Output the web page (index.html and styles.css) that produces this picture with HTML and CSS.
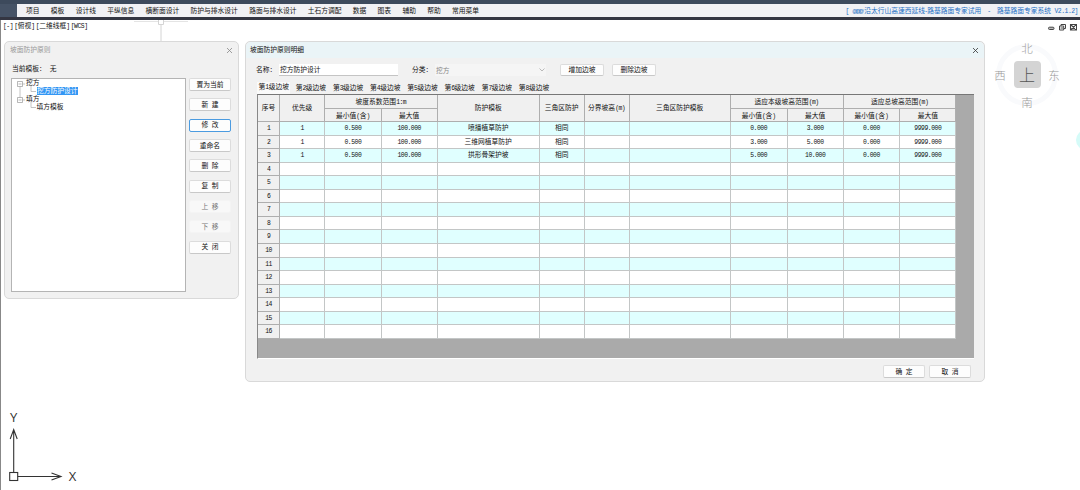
FILE: index.html
```html
<!DOCTYPE html>
<html lang="zh-CN">
<head>
	<meta charset="UTF-8">
	<title>坡面防护原则</title>
	<link rel="stylesheet" href="styles.css">
</head>
<body>
	<header class="topbar">
		<div class="logo"></div>
		<nav class="menu">
			<span>项目</span><span>模板</span><span>设计线</span><span>平纵信息</span><span>横断面设计</span><span>防护与排水设计</span><span>路面与排水设计</span><span>土石方调配</span><span>数据</span><span>图表</span><span>辅助</span><span>帮助</span><span>常用菜单</span>
		</nav>
		<div class="caption"><i>[ </i><b>@@@</b>沿太行山高速西延线-路基路面专家试用<i class="dash">-</i>路基路面专家系统<i> V2.1.2]</i></div>
	</header>
	<main class="desktop">
		<div class="viewname"><i>[-]</i> <i>[</i>俯视<i>]</i> <i>[</i>二维线框<i>]</i> <i>[WCS]</i></div>
		<svg class="grip" width="56" height="24" viewBox="0 0 56 24"><path d="M0 1.5H24M29 1.5H54" stroke="#e4e4e4"/><path d="M24.5 0V4.500H29.5V0M27 4.500V23" fill="none" stroke="#d4d4d4"/></svg>
		<svg class="winctl" width="30" height="9" viewBox="0 0 30 9" fill="none" stroke="#444">
			<rect x="1.500" y="4.200" width="5.500" height="2.300" rx="1" stroke-width="1" fill="#bbb"/>
			<path d="M14 3V1.500H18.500V5.500H17M12.500 3H16.700V7H12.500ZM13.500 5H16" stroke-width="1"/>
			<path d="M23.500 1.500H29.500V7H23.500ZM24 2L29 6.500M29 2L24 6.500" stroke-width="1.100"/>
		</svg>

		<!-- 方位罗盘 -->
		<div class="compass">
			<span class="north">北</span>
			<span class="west">西</span>
			<span class="cube">上</span>
			<span class="east">东</span>
			<span class="south">南</span>
		</div>
		<div class="bubble"></div>

		<!-- 坐标轴 -->
		<svg class="axis" width="80" height="85" viewBox="0 -10 80 85" fill="none" stroke="#333" stroke-width="1.100">
			<rect x="4.700" y="57.500" width="8" height="8"/>
			<path d="M8.700 57.500V15M5.200 24L8.700 14.500L12.200 24M12.700 61.500H55.500M46.500 58L56 61.500L46.500 65"/>
			<text x="8.700" y="7">Y</text>
			<text x="67.500" y="66">X</text>
		</svg>

		<section class="win principle">
			<div class="title"><span>坡面防护原则</span><svg width="7" height="7" viewBox="0 0 7 7"><path d="M1 1L6 6M6 1L1 6"/></svg></div>
			<p class="current">当前模板：<span>无</span></p>
			<div class="body">
				<div class="tree">
					<svg class="branch" width="26" height="32" viewBox="0 0 26 32" fill="none" stroke="#b5b5b5" stroke-width=".8">
						<path d="M3 5V19M5 3H8M14 5V10.500H19M5 19H8M14 21V26.500H19"/>
						<path d="M.5 .5H5.500V5.500H.5ZM1.500 3H4.500M.5 16.500H5.500V21.500H.5ZM1.500 19H4.500" fill="#fff" stroke="#999" stroke-width=".7"/>
					</svg>
					<p>挖方</p>
					<p class="leaf"><mark>挖方防护设计</mark></p>
					<p>填方</p>
					<p class="leaf">填方模板</p>
				</div>
				<div class="side">
					<button>置为当前</button>
					<button>新&ensp;建</button>
					<button class="focus">修&ensp;改</button>
					<button>重命名</button>
					<button>删&ensp;除</button>
					<button>复&ensp;制</button>
					<button disabled>上&ensp;移</button>
					<button disabled>下&ensp;移</button>
					<button>关&ensp;闭</button>
				</div>
			</div>
		</section>

		<section class="win detail">
			<div class="title"><span>坡面防护原则明细</span><svg width="7" height="7" viewBox="0 0 7 7"><path d="M1 1L6 6M6 1L1 6"/></svg></div>
			<div class="form">
				<label>名称：</label><div class="field">挖方防护设计</div>
				<label class="kind">分类：</label><div class="field select">挖方<svg width="6" height="4" viewBox="0 0 6 4"><path d="M.5 .5L3 3L5.500 .5" fill="none" stroke="#aaa" stroke-width=".8"/></svg></div>
				<button>增加边坡</button><button>删除边坡</button>
			</div>
			<div class="tabs">
				<span class="on">第<i>1</i>级边坡</span><span>第<i>2</i>级边坡</span><span>第<i>3</i>级边坡</span><span>第<i>4</i>级边坡</span><span>第<i>5</i>级边坡</span><span>第<i>6</i>级边坡</span><span>第<i>7</i>级边坡</span><span>第<i>8</i>级边坡</span>
			</div>
			<div class="sheet">
				<div class="grid" id="grid">
					<div class="th tall">序号</div>
					<div class="th tall">优先级</div>
					<div class="th wide">坡度系数范围<i>1:m</i></div>
					<div class="th tall">防护模板</div>
					<div class="th tall">三角区防护</div>
					<div class="th tall">分界坡高<i>(m)</i></div>
					<div class="th tall">三角区防护模板</div>
					<div class="th wide">适应本级坡高范围<i>(m)</i></div>
					<div class="th wide">适应总坡高范围<i>(m)</i></div>
					<div class="th">最小值<i>(</i>含<i>)</i></div>
					<div class="th">最大值</div>
					<div class="th">最小值<i>(</i>含<i>)</i></div>
					<div class="th">最大值</div>
					<div class="th">最小值<i>(</i>含<i>)</i></div>
					<div class="th">最大值</div>
				</div>
			</div>
			<div class="foot"><button>确&ensp;定</button><button>取&ensp;消</button></div>
		</section>
	</main>
	<script>
	var data = [
		['1','0.500','100.000','喷播植草防护','相同','','','0.000','3.000','0.000','9999.000'],
		['1','0.500','100.000','三维网植草防护','相同','','','3.000','5.000','0.000','9999.000'],
		['1','0.500','100.000','拱形骨架护坡','相同','','','5.000','10.000','0.000','9999.000']
	];
	var oGrid = document.getElementById('grid');
	//共16行，没有数据的行留空
	for(var i=0;i<16;i++){
		var row = [i+1].concat(data[i] || ['','','','','','','','','','','']);
		for(var j=0;j<row.length;j++){
			var cell = document.createElement('div');
			cell.className = j==0 ? 'td no' : (i%2==0 ? 'td odd' : 'td');
			if(j==4 || j==5){
				cell.innerHTML = row[j];
			}else{
				cell.innerHTML = '<i>'+row[j]+'</i>';
			}
			oGrid.appendChild(cell);
		}
	}
	</script>
</body>
</html>
```
FILE: styles.css
```css
*{margin: 0;padding: 0;box-sizing: border-box;}
body{width: 1080px;height: 490px;overflow: hidden;background: #fff;color: #111;font: 6.75px/10px "Liberation Sans","Noto Sans CJK SC",sans-serif;white-space: nowrap;display: flex;flex-direction: column;}
i{font-family: "Liberation Mono",monospace;font-style: normal;font-size: 6.4px;letter-spacing: -.465px;white-space: pre;}
svg{display: block;flex: none;}
button{width: 42px;height: 13px;background: #fdfdfd;border: 1px solid #dcdcdc;border-bottom-color: #c8c8c8;border-radius: 2px;font: inherit;line-height: 10px;color: #111;text-align: center;}
button:disabled{color: #777;border-color: #f4f4f4;background: #f8f8f8;}
button.focus{border-color: #4b9be0;}

.topbar{height: 20px;flex: none;border-top: 4px solid #3d4a5c;border-bottom: 3px solid #343642;background: #f1f1f4;display: flex;align-items: center;padding-right: 2px;}
.logo{width: 17px;height: 13px;background: #465366;margin-right: 9px;}
.menu{display: flex;gap: 11.3px;padding-top: 1px;}
.caption{color: #1c6fc4;margin-left: auto;padding-top: 1px;}
.caption b{font-size: 5.4px;letter-spacing: -2px;margin-right: 2px;}
.caption .dash{margin: 0 6.5px 0 6px;}

.desktop{flex: 1;position: relative;border-left: 1px solid #888;}
.viewname{padding: 1px 0 0 2px;word-spacing: -.7px;}
.grip{position: absolute;left: 133px;top: 0;}
.winctl{position: absolute;left: 1046px;top: 3px;}
.axis{position: absolute;left: 4px;top: 385px;}
.axis text{font: 13px "Open Sans",sans-serif;fill: #333;stroke: none;text-anchor: middle;}
.bubble{position: absolute;left: 1075px;top: 110px;width: 20px;height: 20px;border-radius: 50%;background: #d5fbf8;}

.compass{position: absolute;left: 992px;top: 18.5px;width: 68px;height: 72px;display: grid;grid-template-columns: 14px 1fr 14px;grid-template-rows: 18px 1fr 18px;place-items: center;color: #999;font: 11.5px/14px "Noto Sans CJK SC",sans-serif;font-weight: 300;}
.compass:before{content: "";position: absolute;left: 3px;top: 5px;width: 62px;height: 62px;box-sizing: border-box;border: 5px solid #f9fafc;border-radius: 50%;}
.compass span{position: relative;}
.north,.south{grid-column: 1 / 4;}
.cube{width: 27px;height: 27px;border-radius: 4px;background: #d4d4d4;color: #555;font-size: 16px;line-height: 26px;text-align: center;}

.win{position: absolute;background: #f1f1f1;border: 1px solid #d9d9d9;border-radius: 5px;display: flex;flex-direction: column;}
.title{display: flex;justify-content: space-between;align-items: center;height: 16px;flex: none;}
.title svg{stroke: #333;stroke-width: .8;}
.principle{left: 3px;top: 21px;width: 235px;height: 258px;padding: 0 7px 6px 6px;}
.principle .title{color: #999;margin-left: -1px;margin-right: -2px;}
.principle .title svg{stroke: #888;}
.current{margin-top: 6px;height: 14px;padding-left: 1px;}
.current span{margin-left: 4px;}
.body{display: flex;gap: 3px;flex: 1;}
.tree{position: relative;width: 175px;background: #fff;border: 1px solid #b4b4b4;padding-left: 14px;}
.tree p{height: 8px;line-height: 8px;}
.tree .leaf{padding-left: 10.5px;}
.tree mark{display: inline-block;height: 8px;background: #3296f4;color: #fff;padding: 0 .5px;}
.branch{position: absolute;left: 5px;top: 2px;}
.side{display: flex;flex-direction: column;gap: 7.35px;}

.detail{left: 244px;top: 21px;width: 740px;height: 341px;}
.detail .title{background: #eaf4f7;border-radius: 5px 5px 0 0;padding: 0 5px 0 4px;}
.form{display: flex;align-items: center;height: 19px;padding: 5px 0 0 10px;}
.form label{width: 23px;}
.form .kind{margin-left: 14px;}
.field{width: 119px;height: 12px;background: #fff;border-bottom: 1px solid #c4c4c4;padding-left: 1px;line-height: 11px;}
.select{width: 111px;background: #f5f5f5;border: 0;color: #888;display: flex;justify-content: space-between;align-items: center;padding-right: 1px;margin-right: 14px;}
.form button{width: 44px;height: 12px;margin-right: 8px;}
.tabs{display: flex;margin-top: 5px;padding-left: 11px;}
.tabs span{width: 37.2px;height: 12px;line-height: 12px;padding-left: 1.5px;}
.tabs .on{width: 33px;margin-right: 4.2px;background: #fafafa;line-height: 10px;}
.sheet{margin: 0 10px 0 11px;height: 265px;background: #aaa;border: 1px solid #888;border-top-color: #777;border-bottom: 1px solid #fff;border-right: 0;}
.grid{display: grid;width: 698.5px;grid-template-columns: 22.200px 45px 56.500px 56px 102px 45px 45px 101px 57px 56px 56.500px 56.3px;grid-template-rows: 13.6px 13.6px;grid-auto-rows: 13.54px;text-align: center;}
.th,.td{border-right: 1px solid #c3c6c6;border-bottom: 1px solid #c3c6c6;overflow: hidden;}
.th{background: #f0f0f0;border-color: #aeaeae;line-height: 13px;}
.td{background: #fff;line-height: 12.5px;}
.odd{background: #e0ffff;}
.no{background: #f0f0f0;border-color: #aeaeae;}
.tall{grid-row: span 2;line-height: 26px;}
.wide{grid-column: span 2;}
.foot{display: flex;justify-content: flex-end;gap: 4px;padding: 6px 13px 0 0;}
```
